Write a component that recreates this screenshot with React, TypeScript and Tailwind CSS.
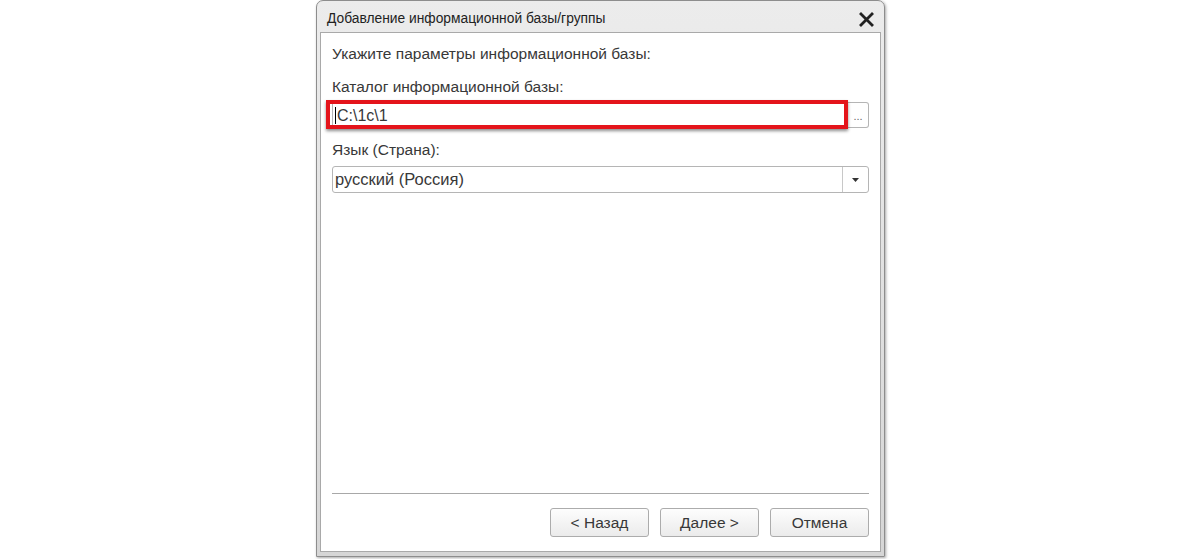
import React from 'react';

const font = { fontFamily: '"Liberation Sans", Arial, sans-serif' };

const DialogButton = ({ children }: { children: React.ReactNode }) => (
  <div className="flex h-[29px] w-[99px] items-center justify-center rounded-[3px] border border-[#acacac] bg-gradient-to-b from-[#fdfdfd] to-[#ebebeb] text-[15.5px] text-[#383838]">
    {children}
  </div>
);

const App = () => {
  return (
    <div className="h-[559px] w-[1200px] bg-white" style={font}>
      <div className="ml-[316px] flex h-[557px] w-[569px] flex-col rounded-t-[7px] border border-[#8d8d8d] bg-gradient-to-b from-[#ececec] to-[#d6d6d6] px-[3px] pb-[4px] shadow-[1px_1px_3px_rgba(0,0,0,0.35)]">
        {/* title bar */}
        <div className="flex h-[31px] shrink-0 items-center justify-between pl-[7px] pr-[7px] pt-[5px]">
          <span className="text-[13.8px] text-[#222]">Добавление информационной базы/группы</span>
          <svg width="15" height="15" viewBox="0 0 15 15">
            <path d="M2 2 L13 13 M13 2 L2 13" stroke="#222" strokeWidth="2.8" strokeLinecap="square" />
          </svg>
        </div>

        {/* body */}
        <div className="flex flex-1 flex-col border border-[#a9a9a9] bg-white px-[11px] pb-[14px] pt-[12px] text-[15.5px] leading-[17px] text-[#383838]">
          <div>Укажите параметры информационной базы:</div>
          <div className="mt-[16px]">Каталог информационной базы:</div>

          <div className="mt-[7px] flex h-[26px]">
            <div className="relative flex flex-1 items-center border border-[#b5b5b5] pl-[2px] text-[16px]">
              <span className="mr-[1px] h-[17px] w-px bg-black" />
              <span>C:\1c\1</span>
              <div className="absolute bottom-[-2px] left-[-7px] right-[-1px] top-[-3px] border-[4px] border-[#e4141b] shadow-[0_2px_3px_rgba(0,0,0,0.45)]" />
            </div>
            <div className="flex w-[21px] items-end justify-center rounded-r-[3px] border border-l-0 border-[#b5b5b5] pb-[5px] text-[11px] leading-[11px] text-[#666]">
              ...
            </div>
          </div>

          <div className="mt-[13px]">Язык (Страна):</div>
          <div className="mt-[8px] flex h-[27px] rounded-[3px] border border-[#b5b5b5]">
            <div className="flex flex-1 items-center pl-[2px] text-[16.5px]">русский (Россия)</div>
            <div className="flex w-[26px] items-center justify-center border-l border-[#c8c8c8]">
              <svg width="7" height="4" viewBox="0 0 7 4">
                <path d="M0 0 L7 0 L3.5 4 Z" fill="#333" />
              </svg>
            </div>
          </div>

          <div className="flex-1" />

          <div className="h-px bg-[#a8a8a8]" />
          <div className="mt-[14px] flex justify-end gap-[11px]">
            <DialogButton>&lt; Назад</DialogButton>
            <DialogButton>Далее &gt;</DialogButton>
            <DialogButton>Отмена</DialogButton>
          </div>
        </div>
      </div>
    </div>
  );
};

export default App;
